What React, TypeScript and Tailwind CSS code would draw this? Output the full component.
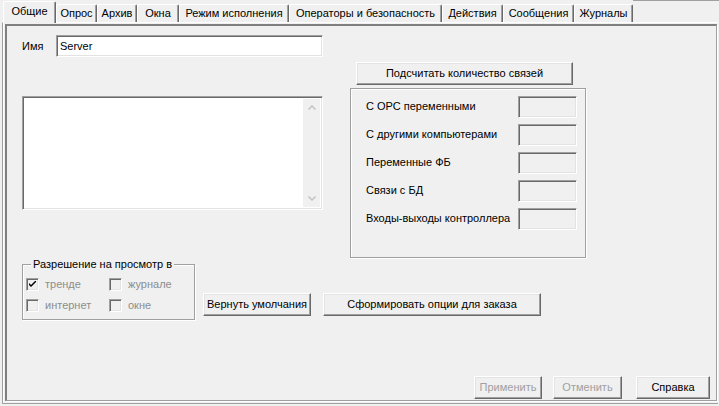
import React from "react";

const raised =
  "bg-[#f0f0f0] border border-t-white border-l-white border-r-[#696969] border-b-[#696969] shadow-[inset_-1px_-1px_0_#a0a0a0,inset_1px_1px_0_#e3e3e3]";
const sunken =
  "border border-t-[#a0a0a0] border-l-[#a0a0a0] border-r-white border-b-white shadow-[inset_1px_1px_0_#696969,inset_-1px_-1px_0_#e3e3e3]";
const etched =
  "border border-[#a0a0a0] shadow-[inset_1px_1px_0_#ffffff,1px_1px_0_#ffffff]";

function Tab({ label, w, active }: { label: string; w: number; active?: boolean }) {
  if (active) {
    return (
      <div
        className="relative z-10 -mb-[1px] h-[22px] flex items-center justify-center border-t border-l border-t-white border-l-white border-r border-r-[#696969] shadow-[inset_-1px_0_0_#a0a0a0] bg-[#f0f0f0] rounded-tl-[2px] rounded-tr-[2px] pb-[3px]"
        style={{ width: w }}
      >
        {label}
      </div>
    );
  }
  return (
    <div
      className="h-[18px] flex items-center justify-center border-t border-l border-t-white border-l-white border-r border-r-[#696969] shadow-[inset_-1px_0_0_#a0a0a0] rounded-tl-[2px] rounded-tr-[2px] pb-[1px]"
      style={{ width: w }}
    >
      {label}
    </div>
  );
}

function Btn({ label, w, disabled, className = "" }: { label: string; w: number; disabled?: boolean; className?: string }) {
  return (
    <div
      className={`${raised} h-[23px] flex items-center justify-center ${disabled ? "text-[#a0a0a0]" : "text-black"} ${className}`}
      style={{ width: w }}
    >
      {label}
    </div>
  );
}

function Check({ label, checked }: { label: string; checked?: boolean }) {
  return (
    <div className="flex items-center h-[13px]">
      <div className={`${sunken} w-[13px] h-[13px] bg-[#f0f0f0] flex items-center justify-center shrink-0`}>
        {checked && (
          <svg width="7" height="7" viewBox="0 0 7 7">
            <path d="M0 2 L0 4 L2 6 L7 1 L7 -1 L2 4 Z" fill="#000" />
          </svg>
        )}
      </div>
      <span className="ml-[6px] text-[#8d8d8d]">{label}</span>
    </div>
  );
}

function Counter({ label }: { label: string }) {
  return (
    <div className="flex items-center h-[21px]">
      <span className="flex-1">{label}</span>
      <div className={`${sunken} w-[59px] h-[22px] bg-[#f0f0f0]`} />
    </div>
  );
}

export default function App() {
  return (
    <div className="w-[719px] h-[406px] bg-[#f0f0f0] font-['Liberation_Sans',Arial,sans-serif] text-[11px] leading-[13px] text-black overflow-hidden">
      {/* tabs */}
      <div className="flex items-end h-[22px] pl-[3px]">
        <Tab label="Общие" w={53} active />
        <Tab label="Опрос" w={41} />
        <Tab label="Архив" w={40} />
        <Tab label="Окна" w={42} />
        <Tab label="Режим исполнения" w={110} />
        <Tab label="Операторы и безопасность" w={153} />
        <Tab label="Действия" w={61} />
        <Tab label="Сообщения" w={71} />
        <Tab label="Журналы" w={59} />
        <div className="flex-1 self-stretch border-t border-t-[#a0a0a0]" />
      </div>

      {/* panel */}
      <div className="ml-[2px] mr-[1px] h-[382px] border-t border-t-white border-l border-l-[#a0a0a0] shadow-[inset_1px_0_0_#ffffff] border-b border-b-[#a0a0a0] pt-[1px] pl-[2px] pr-[1px]">
        <div className="h-[377px] border-t-2 border-l-2 border-t-[#808080] border-l-[#808080] border-r border-b border-r-[#a0a0a0] border-b-[#a0a0a0] shadow-[1px_1px_0_#ffffff] pl-[15px] pt-[9px]">
          {/* top section */}
          <div className="flex h-[223px]">
            <div className="w-[301px] flex flex-col">
              <div className="flex items-center h-[22px]">
                <span className="w-[34px]">Имя</span>
                <div className={`${sunken} w-[267px] h-[22px] bg-white flex items-center pl-[3px]`}>Server</div>
              </div>
              <div className={`${sunken} mt-[39px] h-[114px] bg-white flex justify-end p-[2px]`}>
                <div className="w-[17px] h-full bg-[#f0f0f0] flex flex-col items-center justify-between py-[6px]">
                  <svg width="8" height="5" viewBox="0 0 8 5">
                    <polyline points="0.5,4.5 4,1 7.5,4.5" fill="none" stroke="#c2c2c2" strokeWidth="1.5" />
                  </svg>
                  <svg width="8" height="5" viewBox="0 0 8 5">
                    <polyline points="0.5,0.5 4,4 7.5,0.5" fill="none" stroke="#c2c2c2" strokeWidth="1.5" />
                  </svg>
                </div>
              </div>
            </div>
            <div className="ml-[27px] w-[236px] flex flex-col">
              <Btn label="Подсчитать количество связей" w={217} className="mt-[27px] ml-[6px]" />
              <div className={`${etched} mt-[3px] h-[170px] pt-[7px] pl-[15px] pr-[8px] flex flex-col gap-[7px]`}>
                <Counter label="С ОРС переменными" />
                <Counter label="С другими компьютерами" />
                <Counter label="Переменные ФБ" />
                <Counter label="Связи с БД" />
                <Counter label="Входы-выходы контроллера" />
              </div>
            </div>
          </div>

          {/* bottom section */}
          <div className="flex mt-[6px]">
            <div className={`${etched} relative w-[173px] h-[56px] pt-[13px] pl-[3px]`}>
              <span className="absolute -top-[7px] left-[8px] px-[2px] bg-[#f0f0f0]">Разрешение на просмотр в</span>
              <div className="grid grid-cols-[83px_1fr] gap-y-[8px]">
                <Check label="тренде" checked />
                <Check label="журнале" />
                <Check label="интернет" />
                <Check label="окне" />
              </div>
            </div>
            <Btn label="Вернуть умолчания" w={108} className="mt-[29px] ml-[8px]" />
            <Btn label="Сформировать опции для заказа" w={218} className="mt-[29px] ml-[12px]" />
          </div>

          {/* dialog buttons */}
          <div className="flex mt-[56px] ml-[452px]">
            <Btn label="Применить" w={68} disabled />
            <Btn label="Отменить" w={69} disabled className="ml-[11px]" />
            <Btn label="Справка" w={74} className="ml-[14px]" />
          </div>
        </div>
      </div>
    </div>
  );
}
